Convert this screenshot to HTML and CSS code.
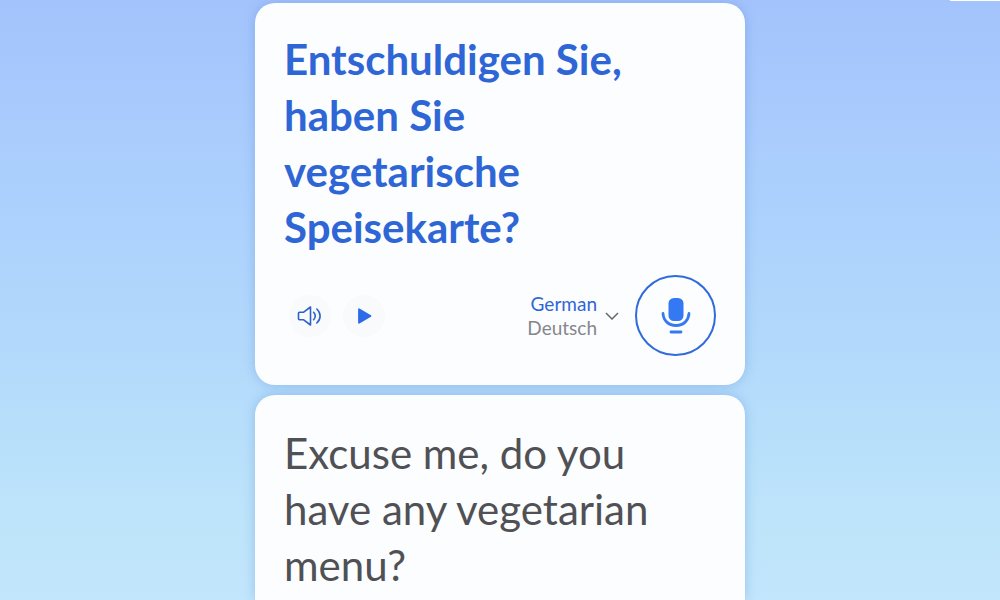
FILE: index.html
```html
<!DOCTYPE html>
<html lang="en">
  <head>
    <meta charset="UTF-8" />
    <meta name="viewport" content="width=device-width, initial-scale=1.0" />
    <title>Translate</title>
    <link rel="stylesheet" href="styles.css">
  </head>
  <body>
    <div class="top-strip"></div>

    <main class="conversation">
      <section class="card">
        <p class="phrase translated" lang="de">
          Entschuldigen Sie, haben Sie vegetarische Speisekarte?
        </p>

        <div class="controls">
          <button class="round-btn" type="button" aria-label="Listen">
            <svg width="26" height="22" viewBox="0 0 26 22" fill="none" stroke="#2f62c8" stroke-width="1.6" stroke-linejoin="round" stroke-linecap="round">
              <path d="M2.5 7.2h4.2L13.5 2v18l-6.8-5.2H2.5a1 1 0 0 1-1-1V8.2a1 1 0 0 1 1-1z" />
              <path d="M16.6 7.3c2.2 2.2 2.2 5.2 0 7.4" />
              <path d="M19.8 4c4.4 3.8 4.4 10.2 0 14" />
            </svg>
          </button>
          <button class="round-btn" type="button" aria-label="Play">
            <svg width="16" height="18" viewBox="0 0 16 18">
              <path d="M3 2.2v13.6L14.5 9z" fill="#2c6bea" stroke="#2c6bea" stroke-width="1.8" stroke-linejoin="round" />
            </svg>
          </button>

          <div class="language">
            <div class="language-names">
              <select id="language" aria-label="Language">
                <option selected>German</option>
                <option>Italian</option>
                <option>French</option>
              </select>
              <label for="language" lang="de">Deutsch</label>
            </div>
            <svg width="14" height="8" viewBox="0 0 14 8" fill="none" stroke="#66686c" stroke-width="1.5">
              <path d="M1 1l6 6 6-6" />
            </svg>
          </div>

          <button class="mic-btn" type="button" aria-label="Speak">
            <svg width="30" height="38" viewBox="0 0 30 38">
              <rect x="7.5" y="1" width="15" height="23" rx="5.5" fill="#3478f3" />
              <path d="M2 16.5c.4 7 5.5 12 13 12s12.600-5 13-12" fill="none" stroke="#3478f3" stroke-width="2.800" stroke-linecap="round" />
              <path d="M10 35h10" stroke="#3478f3" stroke-width="2.800" stroke-linecap="round" />
            </svg>
          </button>
        </div>
      </section>

      <section class="card card-source">
        <p class="phrase">Excuse me, do you have any vegetarian menu?</p>
      </section>
    </main>
  </body>
</html>
```
FILE: styles.css
```css
* {
  box-sizing: border-box;
}

body {
  margin: 0;
  font-family: "Lato", sans-serif;
  background: linear-gradient(to bottom, #a3c3fc 0%, #abcffd 30%, #b3dafb 60%, #bde4fa 85%, #c2e6fc 100%);
}

.top-strip {
  position: absolute;
  top: 0;
  right: 0;
  width: 5%;
  height: 1px;
  background: #fff;
}

.conversation {
  display: flex;
  flex-direction: column;
  gap: 10px;
  width: 100%;
  max-width: 490px;
  min-height: 100vh;
  margin: 0 auto;
  padding-top: 3px;
}

.card {
  padding: 28px 29px 29px;
  border-radius: 20px;
  background: #fcfdff;
  box-shadow: 0 0 12px rgba(90, 140, 215, 0.4);
}

.card-source {
  flex: 1;
  padding-top: 30px;
  padding-bottom: 0;
  border-radius: 20px 20px 0 0;
}

.phrase {
  max-width: 400px;
  margin: 0;
  font-size: 42px;
  line-height: 56px;
  color: #505155;
}

.translated {
  font-weight: 700;
  color: #2f66d6;
}

.controls {
  display: flex;
  align-items: center;
  gap: 12px;
  margin-top: 20px;
  padding-left: 5px;
}

button {
  display: flex;
  align-items: center;
  justify-content: center;
  padding: 0;
  border: none;
  border-radius: 50%;
  cursor: pointer;
}

.round-btn {
  width: 42px;
  height: 42px;
  background: #f9fafc;
}

.language {
  display: flex;
  align-items: center;
  gap: 8px;
  margin-left: auto;
  margin-right: 4px;
}

.language-names {
  display: flex;
  flex-direction: column;
  align-items: flex-end;
  font-size: 19px;
  line-height: 24px;
}

.language-names select {
  appearance: none;
  padding: 0;
  border: none;
  background: none;
  font: inherit;
  text-align-last: right;
  color: #2f66d6;
}

.language-names label {
  color: #85878c;
}

.mic-btn {
  width: 81px;
  height: 81px;
  border: 2px solid #2f6bdc;
  background: transparent;
}
```
